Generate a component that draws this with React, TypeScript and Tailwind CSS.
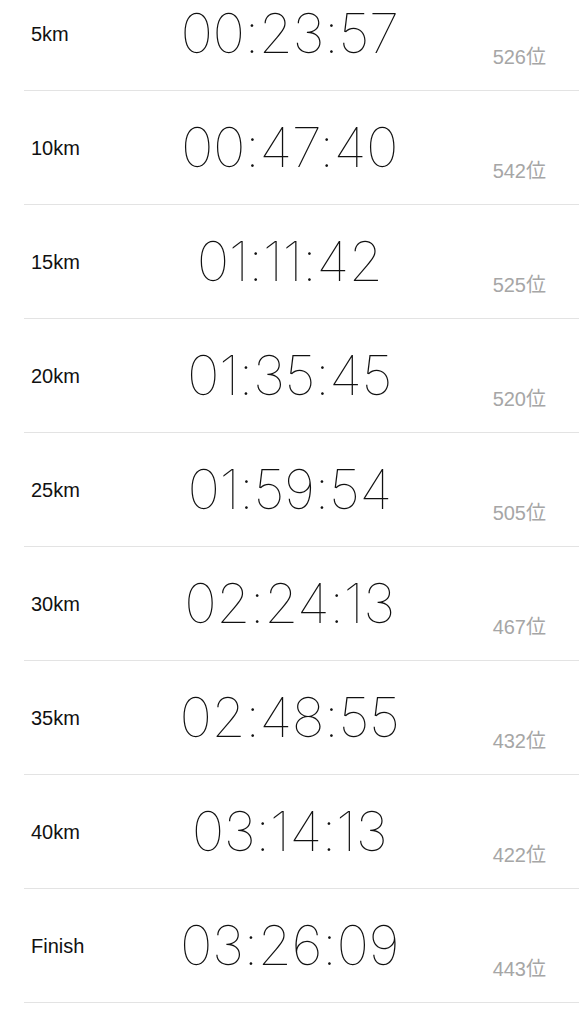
const splits = [
  { label: "5km", time: "00:23:57", rank: "526" },
  { label: "10km", time: "00:47:40", rank: "542" },
  { label: "15km", time: "01:11:42", rank: "525" },
  { label: "20km", time: "01:35:45", rank: "520" },
  { label: "25km", time: "01:59:54", rank: "505" },
  { label: "30km", time: "02:24:13", rank: "467" },
  { label: "35km", time: "02:48:55", rank: "432" },
  { label: "40km", time: "03:14:13", rank: "422" },
  { label: "Finish", time: "03:26:09", rank: "443" },
];

export default function App() {
  return (
    <div className="w-[579px] h-[1024px] overflow-hidden bg-white">
      {/* list is scrolled: first row partly out of view */}
      <div className="-mt-[23px]">
        {splits.map((s) => (
          <div
            key={s.label}
            className="ml-6 h-[114px] border-b border-[#e3e3e3] pr-6 grid grid-cols-[1fr_auto_1fr]"
          >
            <div className="self-center pl-[7px] text-[20px] leading-6 text-[#111] font-['Liberation_Sans','Noto_Sans_CJK_JP',sans-serif]">
              {s.label}
            </div>
            <div className="self-center text-[55px] leading-none font-thin text-[#111] tracking-[-0.5px] font-['Inter',sans-serif]">
              {s.time}
            </div>
            <div className="self-end mb-[21px] pr-[9px] text-right text-[20px] leading-6 text-[#a6a6a6] font-['Liberation_Sans','Noto_Sans_CJK_JP',sans-serif]">
              {s.rank}位
            </div>
          </div>
        ))}
      </div>
    </div>
  );
}
